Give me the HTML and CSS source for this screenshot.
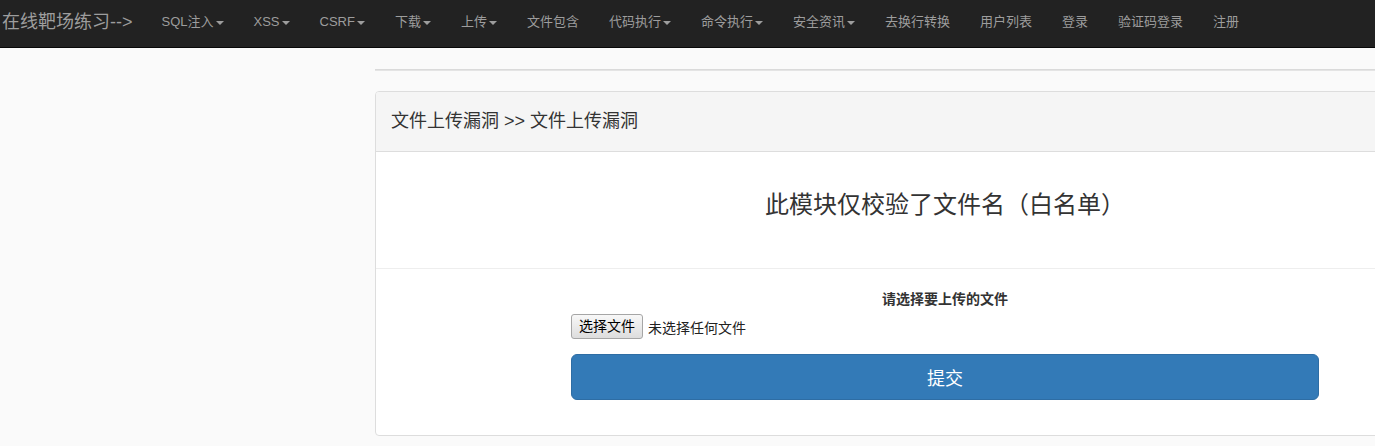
FILE: index.html
```html
<!DOCTYPE html>
<html lang="zh-CN">
<head>
    <meta charset="UTF-8">
    <title>文件上传漏洞</title>
    <link rel="stylesheet" href="styles.css">
</head>
<body>
    <nav class="navbar">
        <a class="brand" href="#">在线靶场练习--&gt;</a>
        <ul class="nav">
            <li><a href="#">SQL注入<span class="caret"></span></a></li>
            <li><a href="#">XSS<span class="caret"></span></a></li>
            <li><a href="#">CSRF<span class="caret"></span></a></li>
            <li><a href="#">下载<span class="caret"></span></a></li>
            <li><a href="#">上传<span class="caret"></span></a></li>
            <li><a href="#">文件包含</a></li>
            <li><a href="#">代码执行<span class="caret"></span></a></li>
            <li><a href="#">命令执行<span class="caret"></span></a></li>
            <li><a href="#">安全资讯<span class="caret"></span></a></li>
            <li><a href="#">去换行转换</a></li>
            <li><a href="#">用户列表</a></li>
            <li><a href="#">登录</a></li>
            <li><a href="#">验证码登录</a></li>
            <li><a href="#">注册</a></li>
        </ul>
    </nav>

    <div class="page">
        <div class="main">
            <hr class="top-line">

            <div class="panel">
                <div class="panel-heading">文件上传漏洞 &gt;&gt; 文件上传漏洞</div>
                <div class="panel-body">
                    <h3 class="title">此模块仅校验了文件名（白名单）</h3>
                </div>
                <hr class="divider">
                <form class="upload-form" onsubmit="return false">
                    <label class="form-label">请选择要上传的文件</label>
                    <div class="file-row">
                        <span class="file-btn">选择文件</span>
                        <span class="file-name">未选择任何文件</span>
                    </div>
                    <button class="btn-submit" type="submit">提交</button>
                </form>
            </div>
        </div>
    </div>
</body>
</html>
```

FILE: styles.css
```css
html, body {
    margin: 0;
    padding: 0;
}
body {
    font-family: "Liberation Sans", Arial, "Noto Sans CJK SC", sans-serif;
    font-size: 14px;
    color: #333;
    background-color: #fafafa;
    overflow: hidden;
}
a {
    text-decoration: none;
}
.navbar {
    display: flex;
    height: 47px;
    background-color: #222;
    border-bottom: 1px solid #080808;
}
.brand {
    padding: 12px 14px 0 2px;
    line-height: 20px;
    font-size: 18px;
    color: #9d9d9d;
    white-space: nowrap;
}
.nav {
    display: flex;
    margin: 0;
    padding: 0;
    list-style: none;
}
.nav a {
    display: block;
    padding: 12px 15px 0;
    line-height: 20px;
    font-size: 13px;
    color: #9d9d9d;
    white-space: nowrap;
}
.caret {
    display: inline-block;
    width: 0;
    height: 0;
    margin-left: 2px;
    vertical-align: middle;
    border-top: 4px solid;
    border-left: 4px solid transparent;
    border-right: 4px solid transparent;
}
.page {
    width: 1375px;
    overflow: hidden;
}
.main {
    width: 1140px;
    margin-left: 375px;
}
.top-line {
    margin: 21px 0 0;
    height: 0;
    border: 0;
    border-top: 1px solid #dadada;
    border-bottom: 1px solid #e4e4e4;
}
.panel {
    margin-top: 20px;
    background-color: #fff;
    border: 1px solid #ddd;
    border-radius: 4px;
}
.panel-heading {
    padding: 15px 15px 16px;
    line-height: 28px;
    font-size: 18px;
    color: #333;
    background-color: #f5f5f5;
    border-bottom: 1px solid #ddd;
    border-radius: 3px 3px 0 0;
}
.panel-body {
    padding: 36px 15px 46px;
}
.title {
    margin: 0;
    line-height: 34px;
    font-size: 24px;
    font-weight: normal;
    text-align: center;
    color: #333;
}
.divider {
    margin: 0;
    height: 0;
    border: 0;
    border-top: 1px solid #eee;
}
.upload-form {
    width: 748px;
    margin: 0 auto;
    padding: 20px 0 35px;
}
.form-label {
    display: block;
    line-height: 20px;
    font-size: 14px;
    font-weight: bold;
    text-align: center;
    color: #333;
}
.file-row {
    display: flex;
    align-items: center;
    margin-top: 5px;
    height: 25px;
}
.file-btn {
    box-sizing: border-box;
    height: 25px;
    padding: 0 7px;
    line-height: 23px;
    font-size: 14px;
    color: #000;
    background: linear-gradient(#f8f8f8, #dddddd);
    border: 1px solid #a6a6a6;
    border-radius: 3px;
}
.file-name {
    margin-left: 5px;
    font-size: 14px;
    color: #222;
}
.btn-submit {
    display: block;
    width: 100%;
    height: 46px;
    margin-top: 15px;
    font-family: inherit;
    font-size: 18px;
    color: #fff;
    background-color: #337ab7;
    border: 1px solid #2e6da4;
    border-radius: 6px;
    cursor: pointer;
}
```
